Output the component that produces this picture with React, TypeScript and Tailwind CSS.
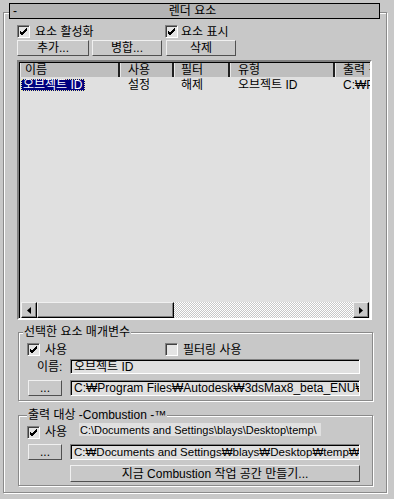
import React from 'react';

const font = "font-['Liberation_Sans','Noto_Sans_CJK_KR',sans-serif] text-[12px] leading-[14px] text-black";
const raised = "bg-[#c8c8c8] border border-t-[#f0f0f0] border-l-[#f0f0f0] border-b-[#505050] border-r-[#505050]";
const sunken = "bg-[#e0e0e0] border border-t-[#808080] border-l-[#808080] border-b-white border-r-white shadow-[inset_1px_1px_0_#000]";
const etched = "border border-[#8a8a8a] shadow-[inset_1px_1px_0_#fff,1px_1px_0_#fff]";

const Check = ({ on }: { on: boolean }) => (
  <div className="w-[13px] h-[13px] shrink-0 bg-[#e4e4e4] border border-t-[#808080] border-l-[#808080] border-b-white border-r-white shadow-[inset_1px_1px_0_#404040] flex items-center justify-center">
    {on && (
      <svg width="9" height="9" viewBox="0 0 9 9">
        <path d="M1 4 L3 6 L8 1 M1 5 L3 7 L8 2 M1 6 L3 8 L8 3" stroke="#000" strokeWidth="1" fill="none" />
      </svg>
    )}
  </div>
);

const Btn = ({ children, className = "" }: { children: React.ReactNode, className?: string }) => (
  <div className={`${raised} flex items-center justify-center ${className}`}>{children}</div>
);

const Field = ({ children, className = "" }: { children: React.ReactNode, className?: string }) => (
  <div className={`${sunken} flex items-center pl-[3px] overflow-hidden whitespace-nowrap ${className}`}>{children}</div>
);

const Arrow = ({ dir }: { dir: 'left' | 'right' }) => (
  <div className="w-[16px] h-[16px] shrink-0 bg-[#c8c8c8] border border-t-[#f0f0f0] border-l-[#f0f0f0] border-b-black border-r-black shadow-[inset_-1px_-1px_0_#808080] flex items-center justify-center">
    <svg width="4" height="7" viewBox="0 0 4 7">
      {dir === 'left' ? <path d="M4 0 L0 3.5 L4 7 Z" fill="#000" /> : <path d="M0 0 L4 3.5 L0 7 Z" fill="#000" />}
    </svg>
  </div>
);

const cols = [
  { name: '이름', w: 'w-[100px]', pl: 'pl-[4px]' },
  { name: '사용', w: 'w-[54px]', pl: 'pl-[7px]' },
  { name: '필터', w: 'w-[56px]', pl: 'pl-[6px]' },
  { name: '유형', w: 'w-[105px]', pl: 'pl-[7px]' },
  { name: '출력 경로', w: 'w-[60px]', pl: 'pl-[7px]' },
];

export default function App() {
  return (
    <div className={`w-[394px] h-[499px] bg-[#c8c8c8] overflow-hidden pt-[3px] ${font}`}>
      {/* Rollout title */}
      <div className="relative z-10 ml-[9px] w-[371px] h-[16px] border border-black bg-[#b4b4b4] flex items-center">
        <span className="pl-[3px] w-[20px]">-</span>
        <span className="flex-1 text-center pr-[24px]">렌더 요소</span>
      </div>

      {/* Rollout frame */}
      <div className={`-mt-[7px] ml-[3px] w-[384px] h-[481px] ${etched} pl-[13px]`}>
        <div className="mt-[12px] h-[13px] flex items-center">
          <div className="w-[148px] flex items-center gap-[5px]"><Check on /> <span>요소 활성화</span></div>
          <div className="flex items-center gap-[3px]"><Check on /> <span>요소 표시</span></div>
        </div>

        <div className="mt-[2px] flex h-[16px]">
          <Btn className="w-[72px]">추가...</Btn>
          <Btn className="w-[70px] ml-[3px]">병합...</Btn>
          <Btn className="w-[70px] ml-[4px]">삭제</Btn>
        </div>

        {/* List */}
        <div className="mt-[4px] w-[355px] h-[260px] bg-[#e0e0e0] border-2 border-t-[#808080] border-l-[#808080] border-b-white border-r-white shadow-[inset_1px_1px_0_#000] pt-[1px] pl-[1px] flex flex-col overflow-hidden">
          <div className="flex h-[14px] shrink-0 whitespace-nowrap overflow-hidden">
            {cols.map((c) => (
              <div key={c.name} className={`${c.w} ${c.pl} shrink-0 h-full bg-[#bebebe] border-l border-l-[#e8e8e8] border-r-2 border-r-[#202020] flex items-center overflow-hidden`}>{c.name}</div>
            ))}
          </div>
          <div className="flex-1 pt-[2px]">
            <div className="flex h-[12px] items-center whitespace-nowrap">
              <div className="w-[100px] shrink-0 pl-[1px]">
                <span className="bg-[#000080] text-white border border-dotted border-[#e8e8a0] px-[1px] inline-flex h-[12px] items-center">오브젝트 ID</span>
              </div>
              <div className="w-[54px] shrink-0 pl-[8px]">설정</div>
              <div className="w-[56px] shrink-0 pl-[7px]">해제</div>
              <div className="w-[105px] shrink-0 pl-[8px]">오브젝트 ID</div>
              <div className="w-[36px] shrink-0 pl-[8px] overflow-hidden">C:₩Program</div>
            </div>
          </div>
          <div className="flex h-[16px] shrink-0 pl-[1px] pr-[1px]">
            <Arrow dir="left" />
            <div className="w-[137px] h-[16px] shrink-0 bg-[#c8c8c8] border border-t-[#f0f0f0] border-l-[#f0f0f0] border-b-black border-r-black shadow-[inset_-1px_-1px_0_#808080]" />
            <div className="flex-1 h-[16px] bg-[repeating-conic-gradient(#c8c8c8_0%_25%,#ffffff_0%_50%)] bg-[length:2px_2px]" />
            <Arrow dir="right" />
          </div>
        </div>

        {/* Selected element parameters */}
        <div className={`mt-[12px] ml-[1px] w-[355px] h-[69px] ${etched} pl-[8px]`}>
          <div className="-mt-[8px] ml-[-4px] w-fit bg-[#c8c8c8] px-[1px] h-[14px]">선택한 요소 매개변수</div>
          <div className="mt-[4px] h-[13px] flex items-center">
            <div className="w-[138px] flex items-center gap-[5px]"><Check on /> <span>사용</span></div>
            <div className="flex items-center gap-[5px]"><Check on={false} /> <span>필터링 사용</span></div>
          </div>
          <div className="mt-[3px] flex h-[15px] items-center">
            <span className="w-[43px] pl-[10px]">이름:</span>
            <Field className="w-[290px] h-[15px]">오브젝트 ID</Field>
          </div>
          <div className="mt-[6px] flex h-[16px]">
            <Btn className="w-[34px] ml-[1px]">...</Btn>
            <Field className="w-[290px] h-[16px] ml-[8px]">C:₩Program Files₩Autodesk₩3dsMax8_beta_ENU₩</Field>
          </div>
        </div>

        {/* Output to Combustion */}
        <div className={`mt-[14px] ml-[1px] w-[355px] h-[71px] ${etched} pl-[8px]`}>
          <div className="-mt-[8px] w-fit bg-[#c8c8c8] px-[1px] h-[14px] whitespace-nowrap">출력 대상 -Combustion -™</div>
          <div className="mt-[1px] flex h-[16px]">
            <div className="self-end flex items-center gap-[5px] w-[52px]"><Check on /> <span>사용</span></div>
            <div className="self-start bg-[#e0e0e0] h-[13px] w-[242px] flex items-center whitespace-nowrap overflow-hidden pl-[1px] text-[11px]">C:\Documents and Settings\blays\Desktop\temp\</div>
          </div>
          <div className="mt-[5px] flex h-[16px]">
            <Btn className="w-[34px] ml-[1px]">...</Btn>
            <Field className="w-[290px] h-[16px] ml-[8px] text-[11.5px]">C:₩Documents and Settings₩blays₩Desktop₩temp₩</Field>
          </div>
          <div className="mt-[5px] flex h-[17px]">
            <Btn className="w-[290px] ml-[43px]">지금 Combustion 작업 공간 만들기...</Btn>
          </div>
        </div>
      </div>
    </div>
  );
}
